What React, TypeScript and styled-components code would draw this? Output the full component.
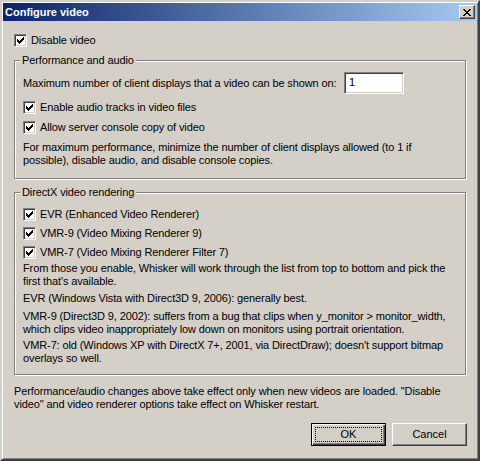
import React from 'react'
import styled, { createGlobalStyle, css } from 'styled-components'

const face = '#D4D0C8'
const shadow = '#808080'
const dark = '#404040'
const uiFont = '"Liberation Sans", Arial, sans-serif'

const Global = createGlobalStyle`
  html, body {
    margin: 0;
    padding: 0;
    background: ${face};
  }
  body {
    font-family: ${uiFont};
    font-size: 11px;
    line-height: 13px;
    letter-spacing: -0.12px;
    color: #000;
  }
`

const Window = styled.div`
  box-sizing: border-box;
  width: 480px;
  height: 461px;
  padding: 1px;
  background: ${face};
  border: 2px solid;
  border-color: ${face} ${dark} ${dark} ${face};
  box-shadow: inset 1px 1px 0 #fff, inset -1px -1px 0 ${shadow};
  display: flex;
  flex-direction: column;
`

const TitleBar = styled.div`
  height: 18px;
  display: flex;
  align-items: center;
  padding: 0 2px;
  background: linear-gradient(to right, #0a246a, #a6caf0);
`

const Title = styled.span`
  flex: 1;
  color: #fff;
  font-weight: bold;
  font-size: 11px;
  letter-spacing: 0;
  white-space: nowrap;
`

const raised = css`
  background: ${face};
  border: 1px solid;
  border-color: #fff ${dark} ${dark} #fff;
  box-shadow: inset -1px -1px 0 ${shadow};
`

const sunken = css`
  background: #fff;
  border: 1px solid;
  border-color: ${shadow} #fff #fff ${shadow};
  box-shadow: inset 1px 1px 0 ${dark}, inset -1px -1px 0 ${face};
`

const CloseButton = styled.div`
  ${raised};
  box-sizing: border-box;
  width: 16px;
  height: 14px;
  display: flex;
  align-items: center;
  justify-content: center;
`

const Body = styled.div`
  flex: 1;
  display: flex;
  flex-direction: column;
  padding: 13px 10px 0 11px;
`

const CheckRow = styled.label<{ $mt?: number }>`
  display: flex;
  align-items: center;
  gap: 4px;
  height: 13px;
  margin-top: ${p => p.$mt ?? 0}px;
  white-space: nowrap;
`

const Box = styled.span`
  ${sunken};
  box-sizing: border-box;
  width: 13px;
  height: 13px;
  flex: none;
  display: flex;
  align-items: center;
  justify-content: center;
`

const Group = styled.div<{ $mt: number; $pt: number; $pb: number }>`
  position: relative;
  margin-top: ${p => p.$mt}px;
  padding: ${p => p.$pt}px 8px ${p => p.$pb}px 8px;
  border: 1px solid ${shadow};
  box-shadow: inset 1px 1px 0 #fff, 1px 1px 0 #fff;
  margin-right: 1px;
  display: flex;
  flex-direction: column;
`

const GroupLabel = styled.span`
  position: absolute;
  top: -7px;
  left: 5px;
  padding: 0 2px;
  background: ${face};
  white-space: nowrap;
`

const FieldRow = styled.div`
  display: flex;
  align-items: center;
  height: 22px;
  white-space: nowrap;
`

const Edit = styled.div`
  ${sunken};
  box-sizing: border-box;
  flex: none;
  width: 60px;
  height: 22px;
  padding: 3px 4px;
  margin-left: auto;
  margin-right: 53px;
`

const Text = styled.p<{ $mt?: number }>`
  margin: ${p => p.$mt ?? 0}px 0 0;
  white-space: nowrap;
`

const ButtonRow = styled.div`
  display: flex;
  justify-content: flex-end;
  gap: 6px;
  margin-top: 12px;
`

const Button = styled.button<{ $default?: boolean }>`
  position: relative;
  box-sizing: border-box;
  width: 75px;
  height: 23px;
  padding: 0;
  font: inherit;
  color: #000;
  ${raised};
  ${p =>
    p.$default &&
    css`
      border: 1px solid #000;
      box-shadow: inset 1px 1px 0 #fff, inset -1px -1px 0 ${dark}, inset -2px -2px 0 ${shadow};
      &::after {
        content: '';
        position: absolute;
        inset: 3px;
        border: 1px dotted #000;
      }
    `}
`

const checkTops = [2, 3, 4, 3, 2, 1, 0]

const CheckMark = () => (
  <svg width="7" height="7" viewBox="0 0 7 7" shapeRendering="crispEdges">
    {checkTops.map((t, i) => (
      <rect key={i} x={i} y={t} width="1" height="3" fill="#000" />
    ))}
  </svg>
)

const Check = ({ label, mt }: { label: string; mt?: number }) => (
  <CheckRow $mt={mt}>
    <Box>
      <CheckMark />
    </Box>
    <span>{label}</span>
  </CheckRow>
)

const closeRows = [
  [0, 1, 6, 7],
  [1, 2, 5, 6],
  [2, 3, 4, 5],
  [3, 4],
  [2, 3, 4, 5],
  [1, 2, 5, 6],
  [0, 1, 6, 7],
]

const CloseGlyph = () => (
  <svg width="8" height="7" viewBox="0 0 8 7" shapeRendering="crispEdges">
    {closeRows.map((xs, y) =>
      xs.map(x => <rect key={`${x}-${y}`} x={x} y={y} width="1" height="1" fill="#000" />)
    )}
  </svg>
)

export default function App() {
  return (
    <>
      <Global />
      <Window>
        <TitleBar>
          <Title>Configure video</Title>
          <CloseButton>
            <CloseGlyph />
          </CloseButton>
        </TitleBar>
        <Body>
          <Check label="Disable video" />

          <Group $mt={13} $pt={11} $pb={11}>
            <GroupLabel>Performance and audio</GroupLabel>
            <FieldRow>
              <span>Maximum number of client displays that a video can be shown on:</span>
              <Edit>1</Edit>
            </FieldRow>
            <Check label="Enable audio tracks in video files" mt={7} />
            <Check label="Allow server console copy of video" mt={7} />
            <Text $mt={7}>
              For maximum performance, minimize the number of client displays allowed (to 1 if
              <br />
              possible), disable audio, and disable console copies.
            </Text>
          </Group>

          <Group $mt={13} $pt={15} $pb={9}>
            <GroupLabel>DirectX video rendering</GroupLabel>
            <Check label="EVR (Enhanced Video Renderer)" />
            <Check label="VMR-9 (Video Mixing Renderer 9)" mt={6} />
            <Check label="VMR-7 (Video Mixing Renderer Filter 7)" mt={6} />
            <Text $mt={3}>
              From those you enable, Whisker will work through the list from top to bottom and pick the
              <br />
              first that's available.
            </Text>
            <Text $mt={4}>EVR (Windows Vista with Direct3D 9, 2006): generally best.</Text>
            <Text $mt={5}>
              VMR-9 (Direct3D 9, 2002): suffers from a bug that clips when y_monitor &gt; monitor_width,
              <br />
              which clips video inappropriately low down on monitors using portrait orientation.
            </Text>
            <Text $mt={3}>
              VMR-7: old (Windows XP with DirectX 7+, 2001, via DirectDraw); doesn't support bitmap
              <br />
              overlays so well.
            </Text>
          </Group>

          <Text $mt={10}>
            Performance/audio changes above take effect only when new videos are loaded. "Disable
            <br />
            video" and video renderer options take effect on Whisker restart.
          </Text>

          <ButtonRow>
            <Button $default>OK</Button>
            <Button>Cancel</Button>
          </ButtonRow>
        </Body>
      </Window>
    </>
  )
}
